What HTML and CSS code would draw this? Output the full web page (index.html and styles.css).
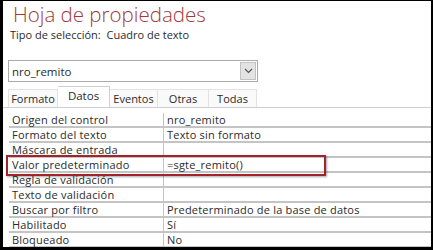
FILE: index.html
```html
<!DOCTYPE html>
<html lang="es">
<head>
    <meta charset="UTF-8">
    <title>Hoja de propiedades</title>
    <link rel="stylesheet" href="styles.css">
</head>
<body>
    <div class="sheet">
        <!-- Cabecera -->
        <h1 class="title">Hoja de propiedades</h1>
        <p class="selection">Tipo de selección:&nbsp; Cuadro de texto</p>

        <!-- Selector de control -->
        <div class="combo">
            <span class="combo-value">nro_remito</span>
            <span class="combo-btn">
                <svg width="9" height="6" viewBox="0 0 9 6"><path d="M1 1 L4.5 4.5 L8 1" fill="none" stroke="#555" stroke-width="1.2"/></svg>
            </span>
        </div>

        <!-- Pestañas -->
        <div class="tabs">
            <div class="tab tab-formato">Formato</div>
            <div class="tab tab-datos active">Datos</div>
            <div class="tab tab-eventos">Eventos</div>
            <div class="tab tab-otras">Otras</div>
            <div class="tab tab-todas">Todas</div>
        </div>

        <!-- Propiedades -->
        <div class="grid">
            <div class="row"><span class="name">Origen del control</span><span class="value">nro_remito</span></div>
            <div class="row"><span class="name">Formato del texto</span><span class="value">Texto sin formato</span></div>
            <div class="row"><span class="name">Máscara de entrada</span><span class="value"></span></div>
            <div class="row"><span class="name">Valor predeterminado</span><span class="value">=sgte_remito()</span></div>
            <div class="row"><span class="name">Regla de validación</span><span class="value"></span></div>
            <div class="row"><span class="name">Texto de validación</span><span class="value"></span></div>
            <div class="row"><span class="name">Buscar por filtro</span><span class="value">Predeterminado de la base de datos</span></div>
            <div class="row"><span class="name">Habilitado</span><span class="value">Sí</span></div>
            <div class="row"><span class="name">Bloqueado</span><span class="value">No</span></div>
        </div>

        <div class="highlight"></div>
    </div>
</body>
</html>
```

FILE: styles.css
```css
/* Marco */
body {
    margin: 0;
    background: #000;
    font-family: "Open Sans", "Noto Sans", sans-serif;
    color: #2b2b2b;
}

.sheet {
    position: relative;
    margin: 1px 2px 0 3px;
    height: 246px;
    background: #fff;
    overflow: hidden;
}

/* Cabecera */
.title {
    margin: 0;
    padding: 0 0 0 10px;
    font-size: 20.5px;
    font-weight: 300;
    line-height: 26px;
    color: #a1393c;
}

.selection {
    margin: 0;
    padding-left: 7px;
    font-size: 11px;
    line-height: 15px;
}

/* Selector */
.combo {
    display: flex;
    align-items: center;
    justify-content: space-between;
    width: 248px;
    height: 20px;
    margin: 18px 0 0 5px;
    border: 1px solid #ababab;
    font-size: 11.5px;
}

.combo-value {
    padding-left: 3px;
}

.combo-btn {
    display: flex;
    align-items: center;
    justify-content: center;
    width: 16px;
    height: 18px;
    margin-right: 1px;
    background: #e3e3e3;
    border: 1px solid #c2c2c2;
    box-sizing: border-box;
}

/* Pestañas */
.tabs {
    display: flex;
    align-items: flex-end;
    height: 21px;
    margin-top: 4px;
    padding-left: 5px;
    border-bottom: 1px solid #cfcfcf;
    font-size: 11px;
}

.tab {
    box-sizing: border-box;
    height: 18px;
    line-height: 17px;
    text-align: center;
    background: #fafafa;
    border: 1px solid #e2e2e2;
    border-bottom: none;
    border-left: none;
}

.tab-formato { width: 50px; border-left: 1px solid #e2e2e2; }
.tab-datos { width: 52px; }
.tab-eventos { width: 48px; }
.tab-otras { width: 51px; }
.tab-todas { width: 48px; }

.tab.active {
    height: 21px;
    line-height: 18px;
    font-size: 11.5px;
    background: #fff;
    border-color: #cfcfcf;
}

/* Rejilla de propiedades */
.grid {
    margin: 5px 0 0 6px;
    font-size: 11px;
    letter-spacing: 0.2px;
}

.row {
    display: grid;
    grid-template-columns: 154px 1fr;
    height: 13px;
    line-height: 13px;
    border-bottom: 2px solid #c4c4c4;
}

.name {
    padding-left: 3px;
    white-space: nowrap;
}

.value {
    padding-left: 3px;
    border-left: 1px solid #c4c4c4;
    white-space: nowrap;
}

/* Recuadro rojo */
.highlight {
    position: absolute;
    left: 3px;
    top: 154px;
    width: 316px;
    height: 17px;
    border: 2px solid #a3232a;
    box-shadow: 1px 1px 2px rgba(0, 0, 0, 0.35);
}
```
